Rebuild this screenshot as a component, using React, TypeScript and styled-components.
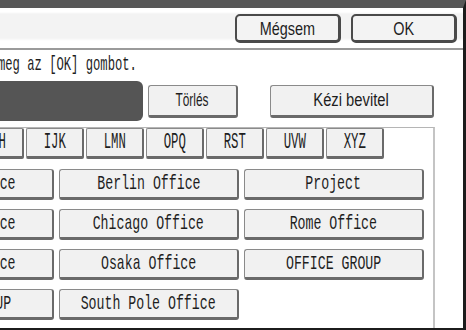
import styled, { createGlobalStyle } from "styled-components";

const GlobalStyle = createGlobalStyle`
  html, body {
    margin: 0;
    padding: 0;
    background: #ffffff;
    overflow: hidden;
  }
  * {
    box-sizing: border-box;
  }
`;

const Frame = styled.div`
  width: 466px;
  height: 330px;
  overflow: hidden;
  background: #ffffff;
  border-top: 8px solid #575757;
  border-right: 3px solid #1c1c1c;
  border-bottom: 2px solid #1c1c1c;
  display: flex;
  flex-direction: column;
  font-family: "Liberation Mono", "DejaVu Sans Mono", monospace;
  color: #1e1e1e;
`;

const Header = styled.div`
  height: 42px;
  flex-shrink: 0;
  display: flex;
  justify-content: flex-end;
  align-items: flex-start;
  gap: 10px;
  padding: 6px 6px 0 0;
  background: linear-gradient(#ffffff 0px, #ffffff 4px, #f3f3f3 6px, #f3f3f3 30px, #ffffff 33px);
  border-bottom: 2px solid #9a9a9a;
`;

const HeaderButton = styled.button`
  width: 106px;
  height: 29px;
  padding: 0;
  border: 2px solid #4a4a4a;
  border-right-width: 3px;
  border-bottom-width: 3px;
  border-radius: 5px;
  background: #f3f3f3;
  display: flex;
  align-items: center;
  justify-content: center;
  font-family: inherit;
  color: inherit;
`;

const Label = styled.span<{ $size: number; $scale: number; $sans?: boolean }>`
  display: inline-block;
  white-space: nowrap;
  line-height: 1;
  font-family: ${(p) =>
    p.$sans ? '"Liberation Sans", Arial, sans-serif' : '"Liberation Mono", monospace'};
  font-size: ${(p) => p.$size}px;
  transform: scaleX(${(p) => p.$scale});
  transform-origin: center;
`;

const Message = styled.div`
  height: 31px;
  flex-shrink: 0;
  padding-top: 4px;
  margin-left: -2px;
  white-space: nowrap;

  & > span {
    transform-origin: left center;
  }
`;

const ActionRow = styled.div`
  height: 40px;
  flex-shrink: 0;
  display: flex;
  align-items: center;
`;

const DarkField = styled.div`
  width: 143px;
  height: 40px;
  background: #555555;
  border-radius: 0 6px 6px 0;
`;

const Button = styled.button<{ $w: number }>`
  width: ${(p) => p.$w}px;
  height: 33px;
  padding: 0;
  border: 1px solid #8a8a8a;
  border-right: 2px solid #6a6a6a;
  border-bottom: 3px solid #6a6a6a;
  border-radius: 3px;
  background: #f1f1f1;
  display: flex;
  align-items: center;
  justify-content: center;
  font-family: inherit;
  color: inherit;
  flex-shrink: 0;
  overflow: visible;
`;

const ClearButton = styled(Button)`
  margin-left: 5px;
`;

const ManualButton = styled(Button)`
  margin-left: 32px;
`;

const Panel = styled.div`
  margin-top: 6px;
  width: 435px;
  flex: 1;
  border-top: 1px solid #b5b5b5;
  border-right: 2px solid #c4c4c4;
  overflow: hidden;
`;

const Tabs = styled.div`
  display: flex;
  gap: 2px;
  margin-left: -34px;
`;

const Tab = styled(Button)`
  height: 31px;
  border-radius: 2px;
`;

const Entries = styled.div`
  margin-top: 10px;
  margin-left: -126px;
  display: grid;
  grid-template-columns: repeat(3, 180px);
  grid-auto-rows: 31px;
  column-gap: 5px;
  row-gap: 9px;
`;

const Entry = styled(Button)`
  height: 31px;
`;

const tabs = ["FGH", "IJK", "LMN", "OPQ", "RST", "UVW", "XYZ"];

const entries = [
  "Athens Office",
  "Berlin Office",
  "Project",
  "London Office",
  "Chicago Office",
  "Rome Office",
  "Sydney Office",
  "Osaka Office",
  "OFFICE GROUP",
  "DESIGN GROUP",
  "South Pole Office",
];

export default function App() {
  return (
    <>
      <GlobalStyle />
      <Frame>
        <Header>
          <HeaderButton>
            <Label $sans $size={19} $scale={0.76}>Mégsem</Label>
          </HeaderButton>
          <HeaderButton>
            <Label $sans $size={19} $scale={0.76}>OK</Label>
          </HeaderButton>
        </Header>
        <Message>
          <Label $size={21} $scale={0.58}>meg az [OK] gombot.</Label>
        </Message>
        <ActionRow>
          <DarkField />
          <ClearButton $w={90}>
            <Label $sans $size={18} $scale={0.66}>Törlés</Label>
          </ClearButton>
          <ManualButton $w={164}>
            <Label $sans $size={18} $scale={0.82}>Kézi bevitel</Label>
          </ManualButton>
        </ActionRow>
        <Panel>
          <Tabs>
            {tabs.map((t) => (
              <Tab key={t} $w={58}>
                <Label $size={22} $scale={0.56}>{t}</Label>
              </Tab>
            ))}
          </Tabs>
          <Entries>
            {entries.map((e) => (
              <Entry key={e} $w={180}>
                <Label $size={21} $scale={0.63}>{e}</Label>
              </Entry>
            ))}
          </Entries>
        </Panel>
      </Frame>
    </>
  );
}
